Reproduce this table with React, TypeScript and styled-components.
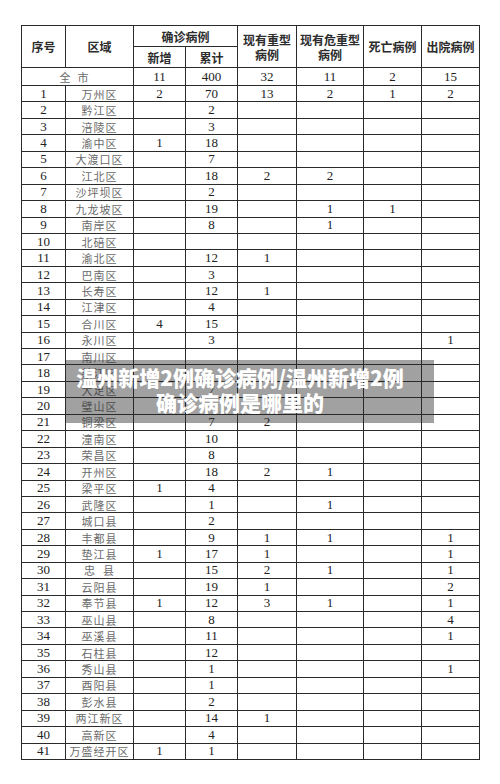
import React from 'react';
import styled, { createGlobalStyle } from 'styled-components';

const GlobalStyle = createGlobalStyle`
  html, body {
    margin: 0;
    padding: 0;
    background: #ffffff;
  }
  body {
    width: 500px;
    height: 784px;
    overflow: hidden;
    font-family: "Liberation Serif", "Noto Sans CJK SC", serif;
  }
`;

const Page = styled.div`
  position: relative;
  width: 500px;
  height: 784px;
  box-sizing: border-box;
  padding: 25px 21px;
`;

const Table = styled.table`
  width: 458px;
  table-layout: fixed;
  border-collapse: collapse;
  border: 1.5px solid #2a2a2a;
`;

const HeadCell = styled.th`
  border: 1px solid #2a2a2a;
  padding: 0;
  height: 20px;
  font-family: "Noto Sans CJK SC", sans-serif;
  font-size: 12px;
  font-weight: 700;
  line-height: 15px;
  color: #2c2c2c;
  text-align: center;
  vertical-align: middle;
`;

const Row = styled.tr<{ $h: number }>`
  height: ${(p) => p.$h}px;
`;

const NumCell = styled.td`
  border: 1px solid #2a2a2a;
  padding: 0;
  font-family: "Liberation Serif", serif;
  font-size: 13px;
  line-height: 14px;
  color: #222;
  text-align: center;
  vertical-align: middle;
`;

const NameCell = styled.td<{ $spread?: boolean }>`
  border: 1px solid #2a2a2a;
  padding: 0;
  font-family: "Noto Sans CJK SC", sans-serif;
  font-size: 11px;
  line-height: 14px;
  letter-spacing: ${(p) => (p.$spread ? '7px' : '1px')};
  color: #6a6a6a;
  text-align: center;
  vertical-align: middle;
  white-space: pre;
`;

const Banner = styled.div`
  position: absolute;
  left: 65px;
  top: 360px;
  width: 369px;
  height: 63px;
  box-sizing: border-box;
  padding: 5px 29px 0 10px;
  background: rgba(40, 40, 40, 0.44);
  font-family: "Noto Sans CJK SC", sans-serif;
  font-weight: 900;
  font-size: 21px;
  line-height: 25px;
  color: #ffffff;
  text-align: center;
`;

const BannerLine = styled.div`
  white-space: nowrap;
`;

type Entry = [string, string, string, string, string, string, string, string];

const rows: Entry[] = [
  ['1', '万州区', '2', '70', '13', '2', '1', '2'],
  ['2', '黔江区', '', '2', '', '', '', ''],
  ['3', '涪陵区', '', '3', '', '', '', ''],
  ['4', '渝中区', '1', '18', '', '', '', ''],
  ['5', '大渡口区', '', '7', '', '', '', ''],
  ['6', '江北区', '', '18', '2', '2', '', ''],
  ['7', '沙坪坝区', '', '2', '', '', '', ''],
  ['8', '九龙坡区', '', '19', '', '1', '1', ''],
  ['9', '南岸区', '', '8', '', '1', '', ''],
  ['10', '北碚区', '', '', '', '', '', ''],
  ['11', '渝北区', '', '12', '1', '', '', ''],
  ['12', '巴南区', '', '3', '', '', '', ''],
  ['13', '长寿区', '', '12', '1', '', '', ''],
  ['14', '江津区', '', '4', '', '', '', ''],
  ['15', '合川区', '4', '15', '', '', '', ''],
  ['16', '永川区', '', '3', '', '', '', '1'],
  ['17', '南川区', '', '', '', '', '', ''],
  ['18', '綦江区', '', '', '', '', '', ''],
  ['19', '大足区', '', '7', '', '', '', ''],
  ['20', '璧山区', '', '', '', '', '', ''],
  ['21', '铜梁区', '', '7', '2', '', '', ''],
  ['22', '潼南区', '', '10', '', '', '', ''],
  ['23', '荣昌区', '', '8', '', '', '', ''],
  ['24', '开州区', '', '18', '2', '1', '', ''],
  ['25', '梁平区', '1', '4', '', '', '', ''],
  ['26', '武隆区', '', '1', '', '1', '', ''],
  ['27', '城口县', '', '2', '', '', '', ''],
  ['28', '丰都县', '', '9', '1', '1', '', '1'],
  ['29', '垫江县', '1', '17', '1', '', '', '1'],
  ['30', '忠  县', '', '15', '2', '1', '', '1'],
  ['31', '云阳县', '', '19', '1', '', '', '2'],
  ['32', '奉节县', '1', '12', '3', '1', '', '1'],
  ['33', '巫山县', '', '8', '', '', '', '4'],
  ['34', '巫溪县', '', '11', '', '', '', '1'],
  ['35', '石柱县', '', '12', '', '', '', ''],
  ['36', '秀山县', '', '1', '', '', '', '1'],
  ['37', '酉阳县', '', '1', '', '', '', ''],
  ['38', '彭水县', '', '2', '', '', '', ''],
  ['39', '两江新区', '', '14', '1', '', '', ''],
  ['40', '高新区', '', '4', '', '', '', ''],
  ['41', '万盛经开区', '1', '1', '', '', '', ''],
];

const total = ['11', '400', '32', '11', '2', '15'];

const widths = [44, 68, 52, 52, 59, 67, 58, 58];

export default function App() {
  return (
    <Page>
      <GlobalStyle />
      <Table>
        <colgroup>
          {widths.map((w, i) => (
            <col key={i} style={{ width: w }} />
          ))}
        </colgroup>
        <thead>
          <Row $h={21}>
            <HeadCell rowSpan={2}>序号</HeadCell>
            <HeadCell rowSpan={2}>区域</HeadCell>
            <HeadCell colSpan={2}>确诊病例</HeadCell>
            <HeadCell rowSpan={2}>
              现有重型
              <br />
              病例
            </HeadCell>
            <HeadCell rowSpan={2}>
              现有危重型
              <br />
              病例
            </HeadCell>
            <HeadCell rowSpan={2}>死亡病例</HeadCell>
            <HeadCell rowSpan={2}>出院病例</HeadCell>
          </Row>
          <Row $h={21}>
            <HeadCell>新增</HeadCell>
            <HeadCell>累计</HeadCell>
          </Row>
        </thead>
        <tbody>
          <Row $h={18}>
            <NameCell colSpan={2} $spread>
              全市
            </NameCell>
            {total.map((v, i) => (
              <NumCell key={i}>{v}</NumCell>
            ))}
          </Row>
          {rows.map((r) => (
            <Row key={r[0]} $h={16.44}>
              <NumCell>{r[0]}</NumCell>
              <NameCell>{r[1]}</NameCell>
              {r.slice(2).map((v, i) => (
                <NumCell key={i}>{v}</NumCell>
              ))}
            </Row>
          ))}
        </tbody>
      </Table>
      <Banner>
        <BannerLine>温州新增2例确诊病例/温州新增2例</BannerLine>
        <BannerLine>确诊病例是哪里的</BannerLine>
      </Banner>
    </Page>
  );
}
